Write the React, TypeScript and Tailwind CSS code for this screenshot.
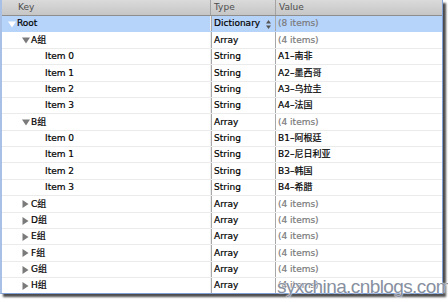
import React from 'react';

type Row = {
  depth: number;
  label: string;
  type: string;
  value: string;
  count?: boolean;
  open?: boolean;
  selected?: boolean;
};

const rows: Row[] = [
  { depth: 0, label: 'Root', type: 'Dictionary', value: '(8 items)', count: true, open: true, selected: true },
  { depth: 1, label: 'A组', type: 'Array', value: '(4 items)', count: true, open: true },
  { depth: 2, label: 'Item 0', type: 'String', value: 'A1–南非' },
  { depth: 2, label: 'Item 1', type: 'String', value: 'A2–墨西哥' },
  { depth: 2, label: 'Item 2', type: 'String', value: 'A3–乌拉圭' },
  { depth: 2, label: 'Item 3', type: 'String', value: 'A4–法国' },
  { depth: 1, label: 'B组', type: 'Array', value: '(4 items)', count: true, open: true },
  { depth: 2, label: 'Item 0', type: 'String', value: 'B1–阿根廷' },
  { depth: 2, label: 'Item 1', type: 'String', value: 'B2–尼日利亚' },
  { depth: 2, label: 'Item 2', type: 'String', value: 'B3–韩国' },
  { depth: 2, label: 'Item 3', type: 'String', value: 'B4–希腊' },
  { depth: 1, label: 'C组', type: 'Array', value: '(4 items)', count: true, open: false },
  { depth: 1, label: 'D组', type: 'Array', value: '(4 items)', count: true, open: false },
  { depth: 1, label: 'E组', type: 'Array', value: '(4 items)', count: true, open: false },
  { depth: 1, label: 'F组', type: 'Array', value: '(4 items)', count: true, open: false },
  { depth: 1, label: 'G组', type: 'Array', value: '(4 items)', count: true, open: false },
  { depth: 1, label: 'H组', type: 'Array', value: '(4 items)', count: true, open: false },
];

const font = { fontFamily: '"DejaVu Sans", "Noto Sans CJK SC", sans-serif' };

const Disclosure: React.FC<{ open?: boolean; white?: boolean }> = ({ open, white }) => {
  const fill = white ? '#ffffff' : '#7a7a7a';
  return open ? (
    <svg width="8" height="7" viewBox="0 0 8 7" className="shrink-0">
      <path d="M0 0.5h8L4 6.5z" fill={fill} />
    </svg>
  ) : (
    <svg width="7" height="8" viewBox="0 0 7 8" className="shrink-0">
      <path d="M0.5 0v8L6.5 4z" fill={fill} />
    </svg>
  );
};

export default function App() {
  return (
    <div className="w-[448px] h-[302px] bg-white relative overflow-hidden" style={font}>
      <div className="w-[443px] h-[294px] border-l-2 border-r border-b border-l-[#a9c0e6] border-r-[#7f9fd6] border-b-[#7f9fd6] shadow-[3px_3px_2px_rgba(0,0,0,0.7)] bg-white overflow-hidden flex flex-col">
        {/* header */}
        <div className="h-[16px] shrink-0 flex bg-gradient-to-b from-[#dadada] to-[#c6c6c6] border-b border-[#8e8e8e] text-[9px] text-[#4d4d4d] leading-[15px]">
          <div className="w-[209px] pl-[16px] border-r border-[#a3a3a3]">Key</div>
          <div className="w-[65px] pl-[3px] border-r border-[#a3a3a3]">Type</div>
          <div className="flex-1 pl-[3px]">Value</div>
        </div>
        {/* rows */}
        <div className="flex flex-col text-[9px] text-black [-webkit-text-stroke:0.2px]">
          {rows.map((r, i) => (
            <div
              key={i}
              className={`h-[16.375px] shrink-0 flex items-center border-b ${r.selected ? 'bg-[#b6d3fa] border-[#b6d3fa]' : 'border-[#ebebeb]'}`}
            >
              <div
                className="w-[209px] h-full flex items-center pt-[1px] border-r border-[#ededed]"
                style={{ paddingLeft: 6 + r.depth * 14 }}
              >
                <div className="w-[9px] flex items-center">
                  {r.open !== undefined && <Disclosure open={r.open} white={r.selected} />}
                </div>
                <span>{r.label}</span>
              </div>
              <div className="w-[65px] h-full flex items-center pt-[1px] pl-[2px] border-l border-r border-[#a8a8a8]">
                <span>{r.type}</span>
                {r.selected && (
                  <svg width="5" height="9" viewBox="0 0 5 9" className="ml-auto mr-[4px]">
                    <path d="M0 3.5L2.5 0L5 3.5z" fill="#555" />
                    <path d="M0 5.5L2.5 9L5 5.5z" fill="#555" />
                  </svg>
                )}
              </div>
              <div className={`flex-1 h-full flex items-center pt-[1px] pl-[2px] ${r.count ? 'text-[#7a7a7a]' : 'text-black'}`}>
                {r.value}
              </div>
            </div>
          ))}
        </div>
      </div>
      {/* watermark */}
      <div
        className="absolute left-[277px] top-[277px] text-[19px] tracking-[-0.6px] text-[#8790a0] leading-none"
        style={{ fontFamily: '"Liberation Sans", Arial, sans-serif', textShadow: '0 0 2px #fff, 0 0 1px #fff' }}
      >
        syxchina.cnblogs.com
      </div>
    </div>
  );
}
